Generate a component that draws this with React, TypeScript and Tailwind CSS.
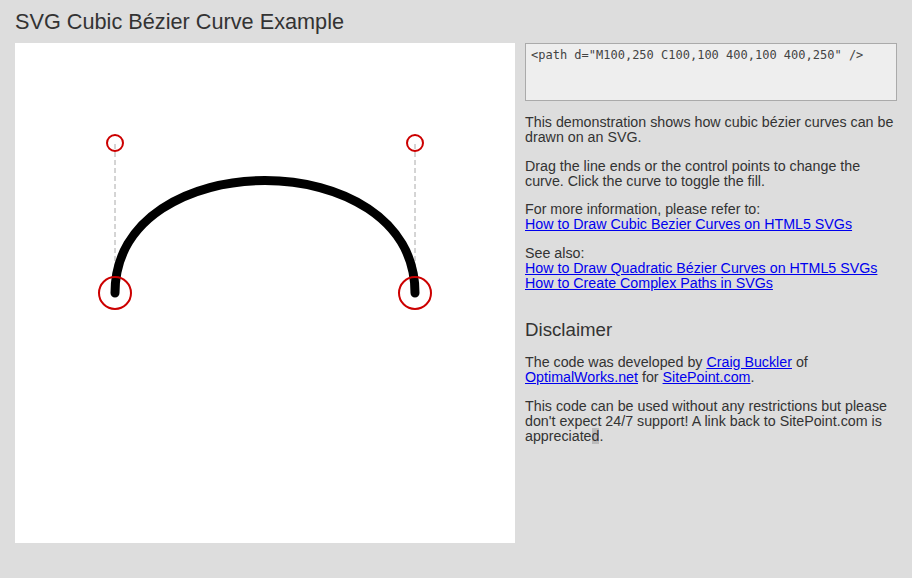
export default function App() {
  return (
    <div className="min-h-[578px] bg-[#dddddd] pl-[15px] text-[#333] font-['Liberation_Sans',Arial,sans-serif]">
      <h1 className="pt-[9px] pb-[8px] text-[21.7px] leading-[26px] font-normal">
        SVG Cubic Bézier Curve Example
      </h1>
      <div className="flex gap-[10px]">
        <div className="h-[500px] w-[500px] shrink-0 bg-white">
          <svg width="500" height="500" viewBox="0 0 500 500">
            <line x1="100" y1="250" x2="100" y2="100" stroke="#aaa" strokeWidth="1" strokeDasharray="5 3" />
            <line x1="400" y1="250" x2="400" y2="100" stroke="#aaa" strokeWidth="1" strokeDasharray="5 3" />
            <path d="M100,250 C100,100 400,100 400,250" fill="none" stroke="#000" strokeWidth="9" strokeLinecap="round" />
            <circle cx="100" cy="100" r="8" fill="none" stroke="#cc0000" strokeWidth="2" />
            <circle cx="400" cy="100" r="8" fill="none" stroke="#cc0000" strokeWidth="2" />
            <circle cx="100" cy="250" r="16" fill="none" stroke="#cc0000" strokeWidth="2" />
            <circle cx="400" cy="250" r="16" fill="none" stroke="#cc0000" strokeWidth="2" />
          </svg>
        </div>
        <div className="w-[372px] text-[14.25px] leading-[15px]">
          <div className="h-[58px] border border-[#aaa] bg-[#eeeeee] px-[5px] pt-[4px] font-['DejaVu_Sans_Mono',monospace] text-[12px] leading-[15px] text-[#444]">
            {'<path d="M100,250 C100,100 400,100 400,250" />'}
          </div>
          <p className="mt-[14px]">
            This demonstration shows how cubic bézier curves can be drawn on an SVG.
          </p>
          <p className="mt-[14px]">
            Drag the line ends or the control points to change the curve. Click the curve to toggle the fill.
          </p>
          <p className="mt-[13px]">
            For more information, please refer to:
            <br />
            <a href="#" className="text-[#0000ee] underline">How to Draw Cubic Bezier Curves on HTML5 SVGs</a>
          </p>
          <p className="mt-[14px]">
            See also:
            <br />
            <a href="#" className="text-[#0000ee] underline">How to Draw Quadratic Bézier Curves on HTML5 SVGs</a>
            <br />
            <a href="#" className="text-[#0000ee] underline">How to Create Complex Paths in SVGs</a>
          </p>
          <h2 className="mt-[28px] text-[18.7px] leading-[22px] font-normal">Disclaimer</h2>
          <p className="mt-[14px]">
            The code was developed by{" "}
            <a href="#" className="text-[#0000ee] underline">Craig Buckler</a> of{" "}
            <a href="#" className="text-[#0000ee] underline">OptimalWorks.net</a> for{" "}
            <a href="#" className="text-[#0000ee] underline">SitePoint.com</a>.
          </p>
          <p className="mt-[14px]">
            This code can be used without any restrictions but please don't expect 24/7 support! A link back to SitePoint.com is appreciate<span className="bg-[#bbbbbb]">d</span>.
          </p>
        </div>
      </div>
    </div>
  );
}
